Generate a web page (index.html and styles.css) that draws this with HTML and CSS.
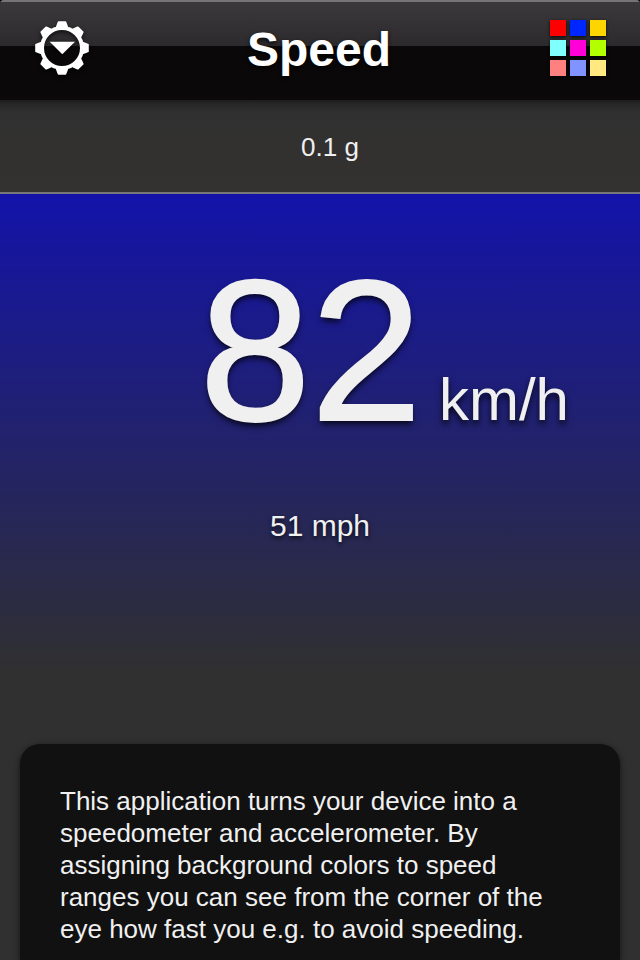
FILE: index.html
```html
<!DOCTYPE html>
<html lang="en">
<head>
    <meta charset="utf-8">
    <title>Speed</title>
    <link rel="stylesheet" href="styles.css">
</head>
<body>
<div class="app">
    <header class="navbar">
        <svg class="gear" width="56" height="56" viewBox="-28 -28 56 56">
            <defs>
                <path id="tooth" d="M-6 -20 V-21.5 L-4.3 -26 Q-4.1 -26.8 -3.4 -26.8 H3.4 Q4.1 -26.8 4.3 -26 L6 -21.5 V-20 Z"/>
            </defs>
            <g fill="#fff">
                <use href="#tooth"/>
                <use href="#tooth" transform="rotate(45)"/>
                <use href="#tooth" transform="rotate(90)"/>
                <use href="#tooth" transform="rotate(135)"/>
                <use href="#tooth" transform="rotate(180)"/>
                <use href="#tooth" transform="rotate(225)"/>
                <use href="#tooth" transform="rotate(270)"/>
                <use href="#tooth" transform="rotate(315)"/>
                <path d="M-12.3 -6.3 H13 L0.3 6.3 Z"/>
            </g>
            <circle r="20" fill="none" stroke="#fff" stroke-width="4"/>
        </svg>
        <h1 class="title">Speed</h1>
        <div class="palette">
            <span class="red"></span>
            <span class="blue"></span>
            <span class="gold"></span>
            <span class="cyan"></span>
            <span class="magenta"></span>
            <span class="lime"></span>
            <span class="salmon"></span>
            <span class="lavender"></span>
            <span class="cream"></span>
        </div>
    </header>
    <div class="accel">0.1 g</div>
    <main class="speed">
        <div class="reading">
            <span class="value">82</span>
            <span class="unit">km/h</span>
        </div>
        <div class="secondary">51 mph</div>
    </main>
    <div class="info">
        This application turns your device into a speedometer and accelerometer. By assigning background colors to speed ranges you can see from the corner of the eye how fast you e.g. to avoid speeding.
    </div>
</div>
</body>
</html>
```
FILE: styles.css
```css
body {
    margin: 0;
    background: #000;
    font-family: "Liberation Sans", Arial, sans-serif;
    color: #f0f0f0;
}

.app {
    display: flex;
    flex-direction: column;
    box-sizing: border-box;
    height: 960px;
    overflow: hidden;
    background: #303030;
    border-radius: 4px 4px 0 0;
}

.navbar {
    display: grid;
    grid-template-columns: 56px 1fr 56px;
    align-items: start;
    box-sizing: border-box;
    height: 100px;
    padding: 20px 34px 0;
    background: linear-gradient(#767576 0, #767576 2px, #3b393b 2px, #2c2a2c 46px, #0a0809 46px, #0a0809 100%);
}

.gear {
    filter: drop-shadow(0 2px 2px rgba(0, 0, 0, 0.7));
}

.title {
    margin: 0;
    padding-right: 2px;
    font-size: 48px;
    line-height: 60px;
    font-weight: bold;
    text-align: center;
    color: #fff;
    text-shadow: 0 2px 4px rgba(0, 0, 0, 0.8);
}

.palette {
    display: grid;
    grid-template-columns: repeat(3, 16px);
    grid-auto-rows: 16px;
    gap: 4px;
    justify-content: end;
}

.palette span {
    box-shadow: 0 1px 3px rgba(0, 0, 0, 0.8);
}

.red { background: #ff0000; }
.blue { background: #0026ff; }
.gold { background: #ffd500; }
.cyan { background: #80ffff; }
.magenta { background: #ff00d9; }
.lime { background: #b3ff00; }
.salmon { background: #ff8080; }
.lavender { background: #8093ff; }
.cream { background: #ffe980; }

.accel {
    box-sizing: border-box;
    height: 94px;
    padding-left: 20px;
    border-bottom: 2px solid #777;
    background: linear-gradient(#1c1c1c, #272727 4px, #303030 12px, #343230);
    font-size: 26px;
    line-height: 94px;
    text-align: center;
}

.speed {
    height: 550px;
    box-sizing: border-box;
    padding-top: 41px;
    background: linear-gradient(#1313aa 0, #303030 480px);
}

.reading {
    display: flex;
    align-items: baseline;
    justify-content: flex-end;
    gap: 17px;
    padding-right: 71px;
    text-shadow: 0 4px 6px rgba(0, 0, 0, 0.8);
}

.value {
    font-size: 200px;
    line-height: 232px;
    -webkit-text-stroke: 2px #f0f0f0;
}

.unit {
    font-size: 60px;
    line-height: 60px;
}

.secondary {
    margin-top: 39px;
    font-size: 30px;
    line-height: 40px;
    text-align: center;
    text-shadow: 0 2px 4px rgba(0, 0, 0, 0.8);
}

.info {
    flex: 1 0 auto;
    margin: 0 20px;
    padding: 41px 40px 0;
    border-radius: 20px 20px 0 0;
    background: #111;
    box-shadow: 0 2px 6px rgba(0, 0, 0, 0.6);
    font-size: 26px;
    line-height: 32px;
}
```
